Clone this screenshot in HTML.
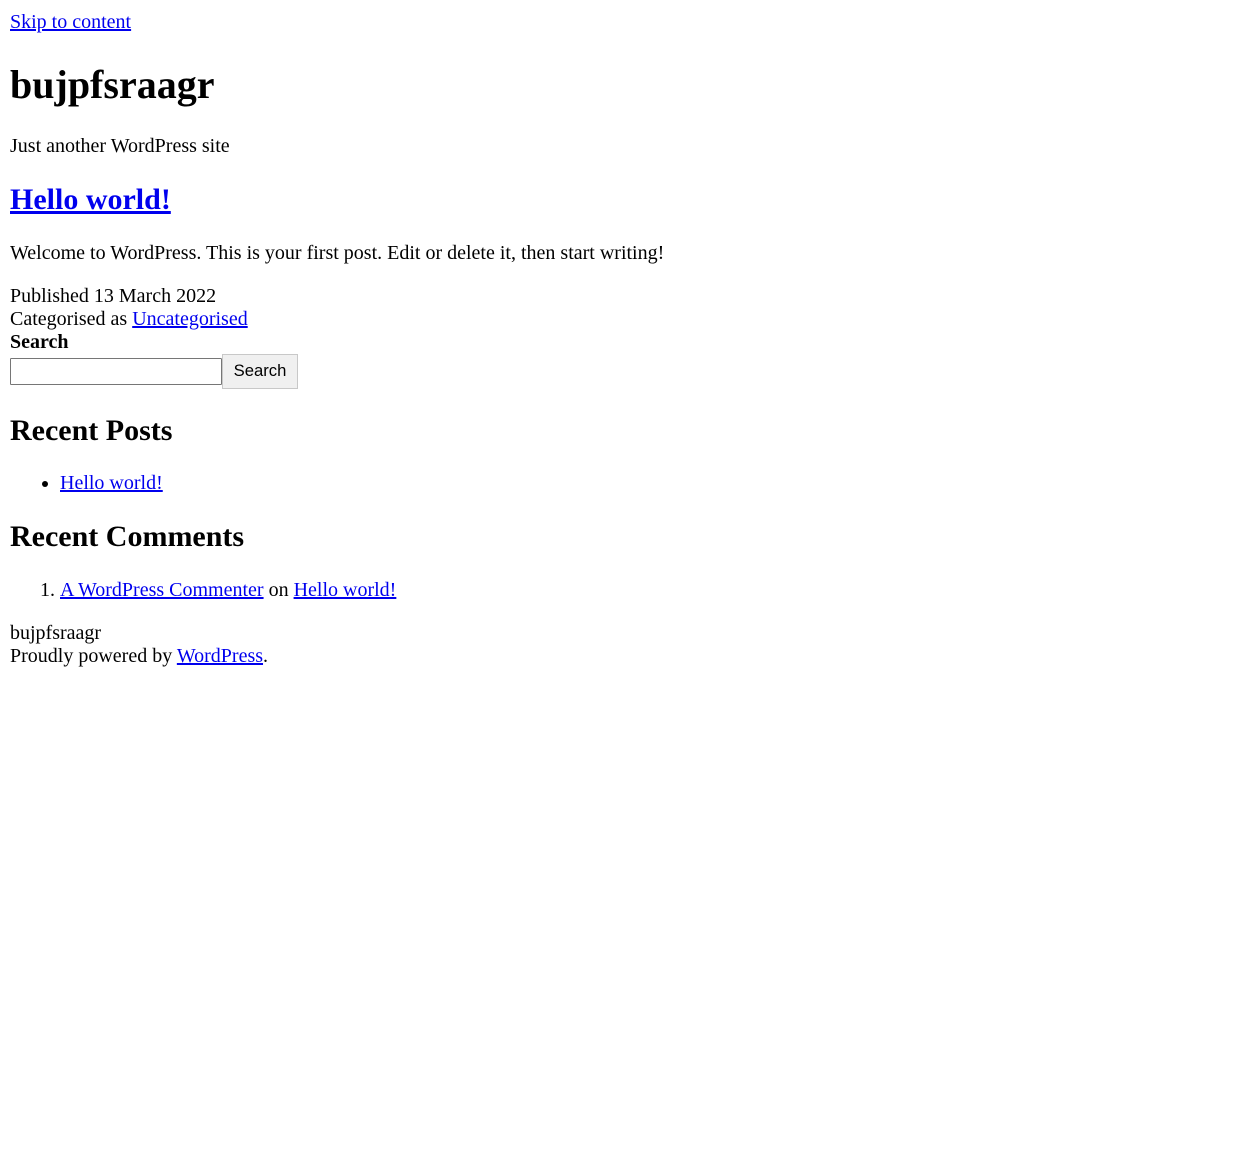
<!DOCTYPE html>
<html>
<head>
<meta charset="utf-8">
<style>
html{zoom:1.25}
body{margin:8px;padding-top:1px;font-family:"Liberation Serif",serif;font-size:16px;color:#000;background:#fff}
a{color:#0000ee}
input,button{font-family:"Liberation Sans",sans-serif;box-sizing:border-box;vertical-align:middle;margin:0}
input{width:169.6px;height:21.6px;border:1px solid #767676;border-radius:1px}
button{width:60.8px;height:28px;background:#f0f0f0;border:1px solid #c8c8c8;font-size:13.33px;padding:0;color:#000}
</style>
</head>
<body>
<a href="#content">Skip to content</a>
<h1>bujpfsraagr</h1>
<p>Just another WordPress site</p>
<h2><a href="#">Hello world!</a></h2>
<p>Welcome to WordPress. This is your first post. Edit or delete it, then start writing!</p>
<div>Published 13 March 2022</div>
<div>Categorised as <a href="#">Uncategorised</a></div>
<form><label><b>Search</b></label><div><input type="text"><button type="button">Search</button></div></form>
<h2>Recent Posts</h2>
<ul><li><a href="#">Hello world!</a></li></ul>
<h2>Recent Comments</h2>
<ol><li><a href="#">A WordPress Commenter</a> on <a href="#">Hello world!</a></li></ol>
<div>bujpfsraagr</div>
<div>Proudly powered by <a href="#">WordPress</a>.</div>
</body>
</html>
